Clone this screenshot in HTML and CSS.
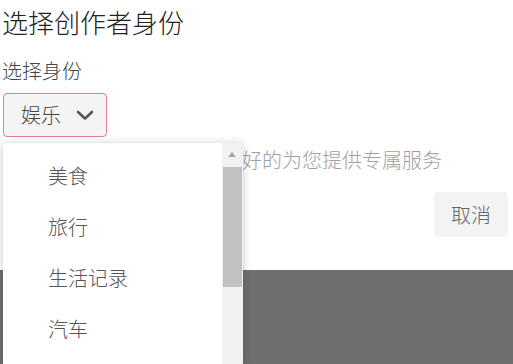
FILE: index.html
```html
<!DOCTYPE html>
<html lang="zh-CN">
<head>
<meta charset="utf-8">
<title>选择创作者身份</title>
<link rel="stylesheet" href="styles.css">
</head>
<body>
<div class="dialog">
  <h1 class="title">选择创作者身份</h1>
  <div class="label">选择身份</div>
  <div class="select">
    <span class="select-value">娱乐</span>
    <svg class="chev" width="18" height="12" viewBox="0 0 18 12"><polyline points="2,3 9,9.5 16,3" fill="none" stroke="#555" stroke-width="2.6" stroke-linecap="round" stroke-linejoin="round"/></svg>
  </div>
  <p class="desc">请选择创作者身份，以便更好的为您提供专属服务</p>
  <div class="actions">
    <button class="btn-cancel">取消</button>
  </div>
</div>
<div class="listbox">
  <ul class="options">
    <li>美食</li>
    <li>旅行</li>
    <li>生活记录</li>
    <li>汽车</li>
  </ul>
  <div class="scrollbar">
    <div class="arrow-up"></div>
    <div class="thumb"></div>
  </div>
</div>
</body>
</html>
```
FILE: styles.css
```css
html, body {
  margin: 0;
  padding: 0;
}
body {
  background: #6f6f70;
  width: 513px;
  height: 364px;
  overflow: hidden;
  position: relative;
  font-family: "Noto Sans CJK SC", "Noto Sans", sans-serif;
  font-weight: 300;
}
.dialog {
  background: #fff;
  height: 270px;
  padding: 0 5px 0 2px;
  box-sizing: border-box;
  display: flex;
  flex-direction: column;
}
.title {
  margin: 0;
  font-size: 26px;
  font-weight: 300;
  line-height: 44px;
  color: #222;
}
.label {
  margin-top: 13px;
  font-size: 20px;
  line-height: 28px;
  color: #444;
}
.select {
  margin-top: 8px;
  margin-left: 1px;
  width: 104px;
  height: 44px;
  box-sizing: border-box;
  border: 1px solid #e57d95;
  border-radius: 4px;
  background: #f4f4f4;
  display: flex;
  align-items: center;
  padding-left: 17px;
}
.select-value {
  font-size: 20px;
  color: #444;
  line-height: 28px;
}
.chev {
  margin-left: 15px;
}
.desc {
  margin: 9px 0 0;
  font-size: 20px;
  line-height: 28px;
  color: #a0a0a0;
  white-space: nowrap;
}
.actions {
  display: flex;
  justify-content: flex-end;
  margin-top: 18px;
}
.btn-cancel {
  width: 74px;
  height: 45px;
  border: none;
  border-radius: 4px;
  background: #f3f3f3;
  font-family: inherit;
  font-weight: 300;
  font-size: 20px;
  color: #666;
  padding: 0;
}
.listbox {
  position: absolute;
  left: 3px;
  top: 143px;
  width: 240px;
  height: 221px;
  background: #fff;
  border-radius: 4px 4px 0 0;
  box-shadow: 0 1px 10px rgba(0, 0, 0, 0.22);
  overflow: hidden;
}
.options {
  list-style: none;
  margin: 0;
  padding: 7px 0 0;
}
.options li {
  height: 51px;
  line-height: 51px;
  padding-left: 45px;
  font-size: 20px;
  color: #555;
}
.scrollbar {
  position: absolute;
  right: 0;
  top: 0;
  bottom: 0;
  width: 21px;
  background: #f1f1f1;
}
.arrow-up {
  position: absolute;
  left: 6px;
  top: 9px;
  width: 0;
  height: 0;
  border-left: 4px solid transparent;
  border-right: 4px solid transparent;
  border-bottom: 5px solid #a3a3a3;
}
.thumb {
  position: absolute;
  left: 1px;
  right: 1px;
  top: 24px;
  height: 120px;
  background: #c1c1c1;
}
```
